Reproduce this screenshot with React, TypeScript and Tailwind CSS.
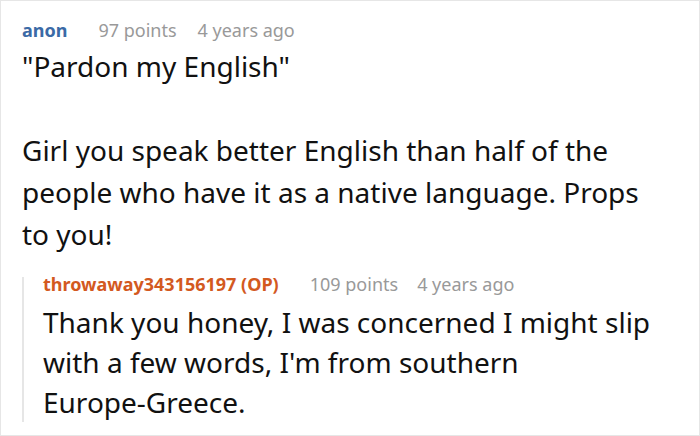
export default function App() {
  return (
    <div className="w-[700px] h-[436px] bg-white border border-[#e6e6e6] overflow-hidden font-['Noto_Sans',sans-serif] text-[#111]">
      <div className="pl-[21px] pt-[14px]">
        <div className="flex items-baseline text-[18px] leading-[30px]">
          <span className="font-bold text-[#3b6aa6]">anon</span>
          <span className="ml-[31px] text-[#999]">97 points</span>
          <span className="ml-[21px] text-[#999]">4 years ago</span>
        </div>
        <div className="text-[28px] leading-[42px]">
          <p>"Pardon my English"</p>
          <p className="mt-[42px] w-[630px]">
            Girl you speak better English than half of the people who have it as a native language. Props
            to you!
          </p>
        </div>
        <div className="mt-[22px] border-l-2 border-[#e6e6e6] pl-[19px]">
          <div className="flex items-center h-[14px] text-[18px]">
            <span className="font-bold text-[#d3591f]">throwaway343156197 (OP)</span>
            <span className="ml-[31px] text-[#999]">109 points</span>
            <span className="ml-[19px] text-[#999]">4 years ago</span>
          </div>
          <p className="mt-[11px] text-[28px] leading-[40px] w-[620px]">
            Thank you honey, I was concerned I might slip with a few words, I'm from southern{' '}
            <span className="whitespace-nowrap">Europe-Greece.</span>
          </p>
        </div>
      </div>
    </div>
  );
}
